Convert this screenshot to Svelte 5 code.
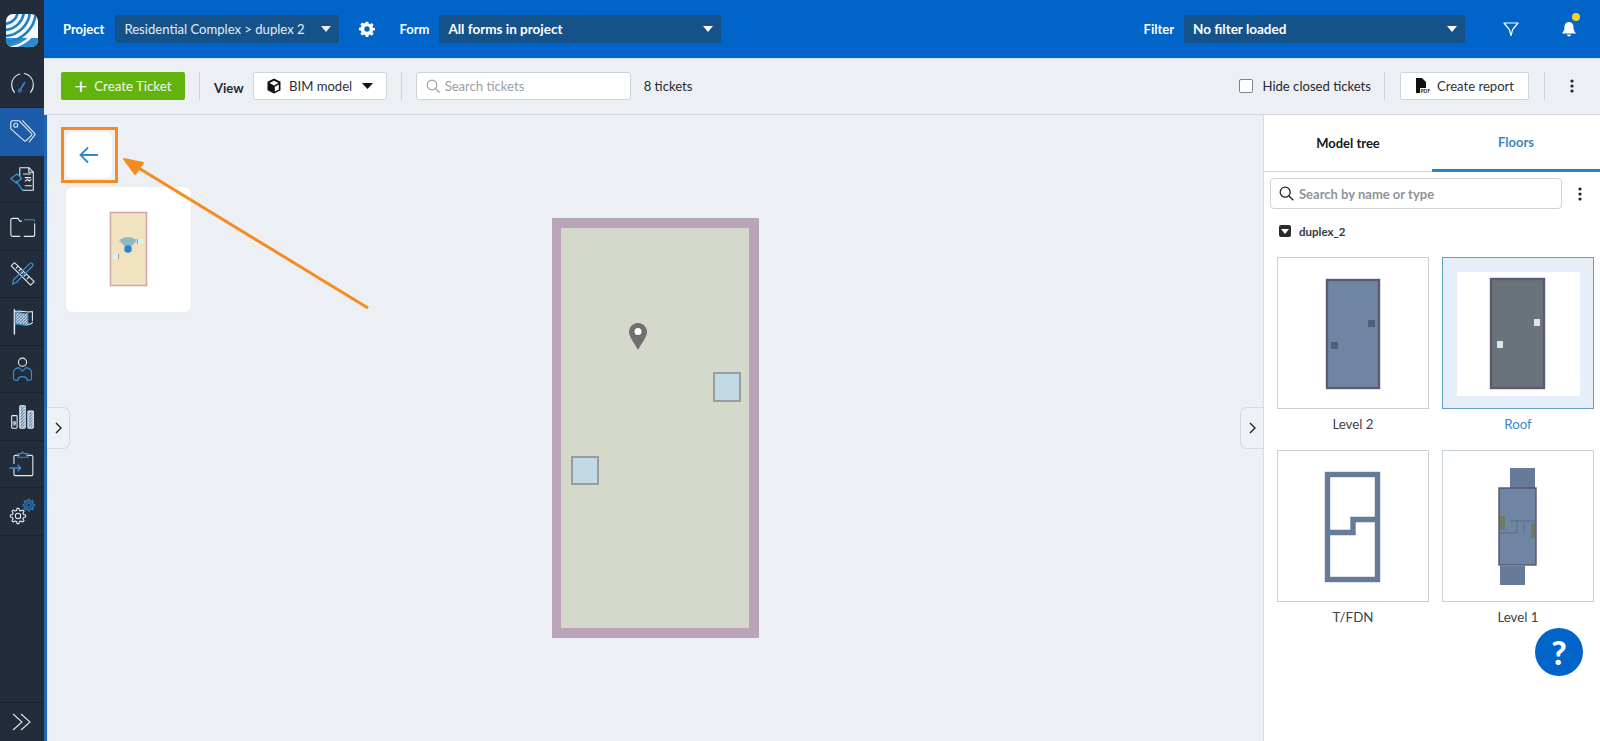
<script>
	let navItems = ['gauge', 'tag', 'report', 'folder', 'tools', 'flag', 'user', 'chart', 'clipboard', 'gears'];
	const floors = ['Level 2', 'Roof', 'T/FDN', 'Level 1'];

	// cog outline, teeth are just alternating radii
	function cog(cx, cy, outer, inner, teeth) {
		let d = '';
		const step = Math.PI / teeth;
		for (let i = 0; i < teeth * 2; i++) {
			const r = i % 2 ? inner : outer;
			for (const off of [-0.32, 0.32]) {
				const a = i * step + off * step;
				d += (d ? 'L' : 'M') + (cx + r * Math.cos(a)).toFixed(2) + ' ' + (cy + r * Math.sin(a)).toFixed(2);
			}
		}
		return d + 'z';
	}
</script>

{#snippet caret()}
	<svg class="caret" width="10" height="6" viewBox="0 0 10 6"><path d="M0 0h10L5 6z" fill="currentColor" /></svg>
{/snippet}

{#snippet kebab()}
	<svg width="4" height="14" viewBox="0 0 4 14" fill="#1d2530"><circle cx="2" cy="2" r="1.6" /><circle cx="2" cy="7" r="1.6" /><circle cx="2" cy="12" r="1.6" /></svg>
{/snippet}

<div class="app">
	<nav class="rail">
		<div class="logo">
			<svg width="32" height="33" viewBox="0 0 32 33">
				<defs><clipPath id="lg"><rect width="32" height="33" rx="7" /></clipPath></defs>
				<g clip-path="url(#lg)">
					<rect width="32" height="33" fill="#f4f8fb" />
					<rect y="24" width="32" height="9" fill="#2a8ccf" />
					<g fill="none" stroke="#1f7fc4" stroke-width="2.6">
						<circle cx="-2" cy="-4" r="14" />
						<circle cx="-2" cy="-4" r="20" />
						<circle cx="-2" cy="-4" r="26" />
						<circle cx="-2" cy="-4" r="32" />
						<circle cx="-2" cy="-4" r="38" stroke="#f4f8fb" />
					</g>
				</g>
			</svg>
		</div>
		{#each navItems as item}
			<div class="nav-item" class:active={item === 'tag'} class:first={item === 'gauge'}>
				<svg width="27" height="27" viewBox="0 0 30 30" fill="none" stroke="#e8edf2" stroke-width="1.2" stroke-linecap="round" stroke-linejoin="round">
					<defs>
						<pattern id="hatch-{item}" width="2.4" height="2.4" patternUnits="userSpaceOnUse" patternTransform="rotate(45)">
							<rect width="2.4" height="2.4" fill="#2d6da6" />
							<path d="M0 0v2.400" stroke="#1c4a78" stroke-width="1" />
						</pattern>
					</defs>
					{#if item === 'gauge'}
						<path d="M6 26a13 13 0 0 1-3-9A12 12 0 0 1 12 5.500" />
						<path d="M17 5a12 12 0 0 1 10 12 13 13 0 0 1-3 9" />
						<path d="M12.500 23l5-8" stroke="#3a8fd0" stroke-width="1.6" />
						<circle cx="12" cy="24" r="1.500" stroke="#3a8fd0" />
					{:else if item === 'tag'}
						<path d="M2 5a2 2 0 0 1 2-2h7l14 14a1.500 1.500 0 0 1 0 2.200l-6 6a1.500 1.500 0 0 1-2.200 0L2 12z" />
						<path d="M15 3l13.500 14a1.500 1.500 0 0 1 0 2l-6 7.500" />
						<circle cx="7.500" cy="8" r="2.200" />
					{:else if item === 'report'}
						<path d="M12 12V3h10l5 5v20H15" />
						<path d="M22 3v5h5M16 10h8M18 14h6M18 18l2.500-2 2 2 2-2M18 23h7" />
						<path d="M2 15l7-5 5 5-6 5zM8 18l7 10" stroke="#3a8fd0" stroke-width="1.500" />
					{:else if item === 'folder'}
						<path d="M14 9h-2L10 6H4a2 2 0 0 0-2 2v16a2 2 0 0 0 2 2h8M17 26h10a1.500 1.500 0 0 0 1.500-1.500V12" />
						<path d="M17 7.500h10a1.500 1.500 0 0 1 1.500 1.500" stroke="#3a8fd0" />
					{:else if item === 'tools'}
						<path d="M6 3L2.500 6.500 24 28l4-4z" />
						<path d="M8 9l2-2M11 12l2-2M14 15l2-2M17 18l2-2M20 21l2-2" />
						<path d="M4 27l1-5L23 4a2 2 0 0 1 3 3L8 25z" stroke="#3a8fd0" stroke-width="1.400" />
					{:else if item === 'flag'}
						<path d="M6 2v27" stroke-width="1.600" />
						<path d="M7 4c6-2 12 2 19 0v10" />
						<path d="M7 5c5-1 9 2 14 1v13c-5 1-9-2-14-1z" fill="url(#hatch-flag)" stroke="#3a8fd0" />
						<path d="M21 18c2 0 4 0 5-2" />
					{:else if item === 'user'}
						<circle cx="15" cy="8" r="4.500" />
						<path d="M11 14c-4 1-6 2-6 5v7a2 2 0 0 0 2 2h3c0-3 2-4 5-4s5 1 5 4h3a2 2 0 0 0 2-2v-7c0-3-2-4-6-5l-4 4z" stroke="#3a8fd0" stroke-width="1.300" />
					{:else if item === 'chart'}
						<path d="M3 24v-9a1 1 0 0 1 1-1h4a1 1 0 0 1 1 1v12a1 1 0 0 1-1 1H4a1 1 0 0 1-1-1z" />
						<rect x="4" y="20" width="4" height="5" fill="url(#hatch-chart)" stroke="none" />
						<rect x="12" y="3" width="6" height="25" rx="1" fill="url(#hatch-chart)" />
						<rect x="21" y="9" width="6" height="19" rx="1" fill="url(#hatch-chart)" />
					{:else if item === 'clipboard'}
						<path d="M11 6H7a1.500 1.500 0 0 0-1.500 1.500V15M5.500 21v6a1.500 1.500 0 0 0 1.500 1.500h18a1.500 1.500 0 0 0 1.500-1.500V7.500A1.500 1.500 0 0 0 25 6h-5" />
						<path d="M10 8V4h3.500l1.500-2 1.500 2H21v4z" stroke="#3a8fd0" />
						<path d="M1 20h12M10 17l3 3-3 3" stroke="#3a8fd0" stroke-width="1.500" />
					{:else}
						<path d={cog(10, 20, 8.5, 6.3, 8)} />
						<circle cx="10" cy="20" r="3" />
						<path d={cog(22, 8, 6.5, 4.8, 8)} stroke="#2d7bb8" fill="#1f4f7e" />
						<circle cx="22" cy="8" r="2.200" stroke="#2d7bb8" fill="#232c3a" />
					{/if}
				</svg>
			</div>
		{/each}
		<div class="expand">
			<svg width="20" height="20" viewBox="0 0 20 20" fill="none" stroke="#dfe5eb" stroke-width="1.100"><path d="M1 2l9 8-9 8M9 2l9 8-9 8" /></svg>
		</div>
	</nav>

	<div class="page">
		<header class="topbar">
			<span class="top-label">Project</span>
			<div class="select project"><span>Residential Complex &gt; duplex 2</span>{@render caret()}</div>
			<svg class="gear" width="16" height="16" viewBox="0 0 24 24" fill="#fff"><path fill-rule="evenodd" d="M10 1h4l.6 3.100 2 .8 2.600-1.800 2.800 2.800-1.800 2.600.8 2L24 10v4l-3 .6-.8 2 1.800 2.600-2.800 2.800-2.600-1.800-2 .8L14 24h-4l-.6-3.100-2-.8-2.600 1.800-2.800-2.800 1.800-2.600-.8-2L0 14v-4l3-.6.8-2L2 4.900l2.800-2.800 2.600 1.800 2-.8zM12 8a4 4 0 1 0 0 8 4 4 0 0 0 0-8z" /></svg>
			<span class="top-label form">Form</span>
			<div class="select strong forms"><span>All forms in project</span>{@render caret()}</div>
			<span class="top-label filter">Filter</span>
			<div class="select strong filters"><span>No filter loaded</span>{@render caret()}</div>
			<svg class="funnel" width="16" height="16" viewBox="0 0 16 16" fill="none" stroke="#fff" stroke-width="1.200" stroke-linejoin="round"><path d="M1 2h14L9.700 8.500 8 14.500 6.300 8.500z" /></svg>
			<div class="bell">
				<svg width="14" height="16" viewBox="0 0 14 16" fill="#fff"><path d="M7 1c-3 0-4.500 2.400-4.500 5 0 3-1 4.600-2.500 6.500h14C12.500 10.600 11.500 9 11.500 6 11.500 3.400 10 1 7 1zM5 13.500h4a2 2 0 0 1-4 0z" /></svg>
				<span class="dot"></span>
			</div>
		</header>

		<div class="toolbar">
			<button class="create"><span class="plus">+</span>Create Ticket</button>
			<span class="sep"></span>
			<span class="view-label">View</span>
			<button class="btn bim">
				<svg width="16" height="16" viewBox="0 0 16 16"><path d="M8 .5l6.500 3.200v8.600L8 15.500l-6.500-3.200V3.700z" fill="#111" /><path d="M8 7.500L3.500 5 8 2.800 12.500 5zM8.800 8.700l4-2.200v5l-4 2z" fill="#fff" /></svg>
				BIM model
				<svg class="bim-caret" width="11" height="6" viewBox="0 0 11 6"><path d="M0 0h11L5.500 6z" fill="#111" /></svg>
			</button>
			<span class="sep"></span>
			<div class="ticket-search">
				<svg width="14" height="14" viewBox="0 0 14 14" fill="none" stroke="#9aa1a9" stroke-width="1.200"><circle cx="6" cy="6" r="4.800" /><path d="M9.500 9.500L13.500 13.500" /></svg>
				<span>Search tickets</span>
			</div>
			<span class="count">8 tickets</span>
			<span class="checkbox"></span>
			<span class="hide">Hide closed tickets</span>
			<span class="sep right"></span>
			<button class="btn report">
				<svg width="15" height="16" viewBox="0 0 15 16"><path d="M1 0h6l4 4v6H5v5H1z" fill="#111" /><text x="5.500" y="15" font-size="5" font-weight="700" fill="#111" font-family="Lato, sans-serif">PDF</text></svg>
				Create report
			</button>
			<span class="sep last"></span>
			<span class="tool-kebab">{@render kebab()}</span>
		</div>

		<div class="body">
			<main class="canvas">
				<div class="back-column">
					<button class="back" aria-label="Back">
						<svg width="20" height="18" viewBox="0 0 20 18" fill="none" stroke="#2f88c7" stroke-width="1.800"><path d="M19 9H1.500M9 1.500L1.500 9 9 16.500" /></svg>
					</button>
					<div class="minimap">
						<svg width="125" height="125" viewBox="0 0 125 125">
							<rect x="44.500" y="25.500" width="36" height="73" fill="#f1e2c0" stroke="#d3aaa8" stroke-width="1.600" />
							<path d="M53 53q9-6 18 0l-6 7h-6z" fill="#8db9cc" />
							<circle cx="62" cy="62" r="3.800" fill="#2a86c8" />
							<rect x="72" y="52" width="5" height="5" fill="#dff1f3" />
							<path d="M71.500 52v5" stroke="#9a9d9f" />
							<rect x="47" y="67" width="5" height="5" fill="#dff1f3" />
							<path d="M52.500 67v5" stroke="#9a9d9f" />
						</svg>
					</div>
				</div>

				<svg class="plan" width="207" height="420" viewBox="0 0 207 420">
					<rect width="207" height="420" fill="#baa4b9" />
					<rect x="9" y="10" width="188" height="400" fill="#d5d9cb" />
					<rect x="162" y="155" width="26" height="28" fill="#c2dae5" stroke="#9a9d9f" stroke-width="2" />
					<rect x="20" y="239" width="26" height="27" fill="#c2dae5" stroke="#9a9d9f" stroke-width="2" />
					<path d="M86 105c-5 0-9 4-9 9 0 5 6 12 9 18 3-6 9-13 9-18 0-5-4-9-9-9z" fill="#6f6f6f" />
					<circle cx="86" cy="113.500" r="3.500" fill="#fff" />
				</svg>

				<div class="tab left-tab"><svg width="9" height="12" viewBox="0 0 9 12" fill="none" stroke="#222" stroke-width="1.400"><path d="M2 1l5 5-5 5" /></svg></div>
				<div class="tab right-tab"><svg width="9" height="12" viewBox="0 0 9 12" fill="none" stroke="#222" stroke-width="1.400"><path d="M2 1l5 5-5 5" /></svg></div>

				<!-- annotation drawn over the screenshot -->
				<span class="callout"></span>
				<svg class="arrow" width="330" height="200" viewBox="0 0 330 200">
					<path d="M321 193L90 52" stroke="#f68b1f" stroke-width="3" fill="none" />
					<path d="M77 44l19 4-8 11z" fill="#f68b1f" stroke="#f68b1f" stroke-width="2" stroke-linejoin="round" />
				</svg>
			</main>

			<aside class="panel">
				<div class="tabs">
					<div class="tab-title">Model tree</div>
					<div class="tab-title current">Floors</div>
				</div>
				<div class="panel-search">
					<div class="search-box">
						<svg width="15" height="15" viewBox="0 0 15 15" fill="none" stroke="#222" stroke-width="1.300"><circle cx="6.200" cy="6.200" r="5" /><path d="M10 10l4.300 4.300" /></svg>
						<span>Search by name or type</span>
					</div>
					<span class="panel-kebab">{@render kebab()}</span>
				</div>
				<div class="tree-row">
					<span class="tree-toggle"><svg width="8" height="5" viewBox="0 0 8 5"><path d="M0 0h8L4 5z" fill="#fff" /></svg></span>
					duplex_2
				</div>
				<div class="floors">
					{#each floors as floor}
						<div class="floor" class:selected={floor === 'Roof'}>
							<div class="thumb">
								<svg width="150" height="150" viewBox="0 0 150 150">
									{#if floor === 'Level 2'}
										<rect x="49" y="22" width="52" height="108" fill="#6f86a3" stroke="#5c5a72" stroke-width="2.400" />
										<rect x="90" y="62" width="7" height="7" fill="#4e6178" />
										<rect x="53" y="84" width="7" height="7" fill="#4e6178" />
									{:else if floor === 'Roof'}
										<rect x="14" y="14" width="123" height="124" fill="#fff" />
										<rect x="48" y="21" width="53" height="109" fill="#68747a" stroke="#5c5a72" stroke-width="2.400" />
										<rect x="91" y="61" width="6" height="7" fill="#dfe5e3" />
										<rect x="54" y="83" width="6" height="7" fill="#dfe5e3" />
									{:else if floor === 'T/FDN'}
										<rect x="49.500" y="23.500" width="50" height="105" fill="none" stroke="#657b97" stroke-width="5.400" />
										<path d="M49.500 81.500h25.500V68.500h24.500" fill="none" stroke="#657b97" stroke-width="5.400" />
									{:else}
										<rect x="67" y="17" width="25" height="20" fill="#657b97" />
										<rect x="57" y="115" width="25" height="19" fill="#657b97" />
										<rect x="56" y="37" width="37" height="77" fill="#6f86a3" stroke="#5c4f6a" stroke-width="1.400" />
										<rect x="57" y="65" width="5" height="14" fill="#6f7a68" />
										<rect x="88" y="72" width="4" height="15" fill="#6f7a68" />
										<path d="M57 82h17V70M67 70h25M81 72v10" fill="none" stroke="#4d5f7a" stroke-width="0.700" />
									{/if}
								</svg>
							</div>
							<div class="floor-name">{floor}</div>
						</div>
					{/each}
				</div>
				<div class="help">?</div>
			</aside>
		</div>
	</div>
</div>

<style>
	:global(body) {
		margin: 0;
		overflow: hidden;
	}

	.app {
		display: flex;
		width: 1600px;
		height: 741px;
		overflow: hidden;
		font-family: Lato, "Liberation Sans", sans-serif;
		color: #1f2833;
		font-size: 13px;
	}

	.rail {
		width: 44px;
		flex: none;
		display: flex;
		flex-direction: column;
		background: #232c3a;
	}

	.logo {
		height: 58px;
		flex: none;
		display: flex;
		align-items: flex-start;
		justify-content: center;
		padding-top: 14px;
		box-sizing: border-box;
	}

	.nav-item {
		height: 47.500px;
		flex: none;
		display: flex;
		align-items: center;
		justify-content: center;
		box-sizing: border-box;
		border-bottom: 1px solid #1a222e;
	}

	.nav-item.first {
		height: 50px;
	}

	.nav-item.active {
		background: #1c5ba8;
		border-bottom: 0;
	}

	.expand {
		margin-top: auto;
		height: 38px;
		border-top: 1px solid #1a222e;
		display: flex;
		align-items: center;
		justify-content: center;
	}

	.page {
		flex: 1;
		display: flex;
		flex-direction: column;
		min-width: 0;
	}

	.topbar {
		height: 58px;
		flex: none;
		display: flex;
		align-items: center;
		background: #0064c8;
		color: #fff;
		padding-left: 19px;
		box-sizing: border-box;
	}

	.top-label {
		font-weight: 700;
		font-size: 13px;
	}

	.select {
		height: 28px;
		display: flex;
		align-items: center;
		justify-content: space-between;
		background: #15528a;
		border-radius: 2px;
		padding: 0 8px 0 9px;
		box-sizing: border-box;
		color: #e4edf6;
		font-size: 13.100px;
	}

	.select.strong {
		font-weight: 700;
		font-size: 13.500px;
		color: #fff;
	}

	.project {
		width: 224px;
		margin-left: 11px;
	}

	.gear {
		margin-left: 20px;
	}

	.form {
		margin-left: 24px;
	}

	.forms {
		width: 282px;
		margin-left: 10px;
	}

	.filter {
		margin-left: auto;
	}

	.filters {
		width: 281px;
		margin-left: 10px;
	}

	.funnel {
		margin-left: 38px;
	}

	.bell {
		position: relative;
		display: flex;
		margin-left: 43px;
		margin-right: 24px;
	}

	.dot {
		position: absolute;
		top: -8px;
		left: 10px;
		width: 8px;
		height: 8px;
		border-radius: 50%;
		background: #f5d327;
	}

	.toolbar {
		height: 57px;
		flex: none;
		display: flex;
		align-items: center;
		background: #ecf0f4;
		border-top: 1px solid #cfe0f2;
		border-bottom: 1px solid #d5d9de;
		box-sizing: border-box;
		padding: 0 0 2px 17px;
		font-size: 13.100px;
	}

	button {
		font-family: inherit;
		cursor: pointer;
	}

	.create {
		width: 124px;
		height: 28px;
		display: flex;
		align-items: center;
		justify-content: center;
		gap: 7px;
		background: #63b30f;
		border: 0;
		border-radius: 2px;
		color: #f1f8e8;
		font-size: 13.300px;
		padding: 0;
	}

	.plus {
		font-size: 22px;
		line-height: 22px;
		font-weight: 400;
		color: #fff;
	}

	.sep {
		width: 1px;
		height: 28px;
		background: #cdd2d8;
		margin: 0 14px;
		flex: none;
	}

	.view-label {
		font-weight: 700;
		font-size: 13px;
		margin-right: 9px;
		margin-top: 4px;
	}

	.btn {
		height: 28px;
		display: flex;
		align-items: center;
		background: #fff;
		border: 1px solid #d0d5db;
		border-radius: 2px;
		color: #2a323c;
		font-size: 13.100px;
		padding: 0;
		box-sizing: border-box;
	}

	.bim {
		width: 134px;
		justify-content: center;
		gap: 7px;
	}

	.bim-caret {
		margin-left: 3px;
	}

	.ticket-search {
		width: 215px;
		height: 28px;
		display: flex;
		align-items: center;
		gap: 5px;
		padding-left: 9px;
		box-sizing: border-box;
		background: #fff;
		border: 1px solid #cdd2d9;
		border-radius: 3px;
		color: #98a0a8;
	}

	.count {
		margin-left: 13px;
	}

	.checkbox {
		width: 12px;
		height: 12px;
		margin-left: auto;
		background: #fff;
		border: 1px solid #7d838a;
		border-radius: 2px;
	}

	.hide {
		margin-left: 9px;
	}

	.sep.right {
		margin: 0 15px 0 13px;
	}

	.sep.last {
		margin: 0 0 0 15px;
	}

	.report {
		width: 129px;
		justify-content: center;
		gap: 7px;
	}

	.tool-kebab {
		display: flex;
		margin-left: 25px;
		margin-right: 26px;
	}

	.body {
		flex: 1;
		display: flex;
		min-height: 0;
	}

	.canvas {
		position: relative;
		flex: 1;
		background: #ecf0f4;
		border-left: 3px solid #2267b4;
		box-shadow: inset 1px 0 #dbe9f7;
		box-sizing: border-box;
	}

	.back-column {
		display: flex;
		flex-direction: column;
		align-items: flex-start;
		gap: 9px;
		padding: 17px 0 0 19px;
	}

	.back {
		width: 46px;
		height: 46px;
		display: flex;
		align-items: center;
		justify-content: center;
		background: #fff;
		border: 0;
		border-radius: 6px;
		padding: 0;
	}

	.minimap {
		width: 125px;
		height: 125px;
		background: #fff;
		border-radius: 6px;
		box-shadow: 0 0 1px #d5d9de;
	}

	.plan {
		position: absolute;
		left: 505px;
		top: 103px;
	}

	.tab {
		position: absolute;
		top: 292px;
		width: 23px;
		height: 42px;
		display: flex;
		align-items: center;
		justify-content: center;
		background: #eef2f6;
		border: 1px solid #d5d9de;
		box-sizing: border-box;
	}

	.left-tab {
		left: 0;
		border-left: 0;
		border-radius: 0 7px 7px 0;
	}

	.right-tab {
		right: 0;
		border-right: 0;
		border-radius: 7px 0 0 7px;
	}

	.callout {
		position: absolute;
		left: 14px;
		top: 12px;
		width: 57px;
		height: 56px;
		border: 3px solid #f68b1f;
		box-sizing: border-box;
	}

	.arrow {
		position: absolute;
		left: 0;
		top: 0;
		overflow: visible;
	}

	.panel {
		position: relative;
		width: 337px;
		flex: none;
		background: #fff;
		border-left: 1px solid #d5dce3;
		box-sizing: border-box;
	}

	.tabs {
		height: 57px;
		display: grid;
		grid-template-columns: 168px 168px;
		border-bottom: 1px solid #c9d5df;
		box-sizing: border-box;
	}

	.tab-title {
		display: flex;
		align-items: center;
		justify-content: center;
		font-weight: 700;
		font-size: 13px;
		color: #16191d;
	}

	.tab-title.current {
		color: #3b86c2;
		border-bottom: 3px solid #2a83c4;
		margin-bottom: -1px;
	}

	.panel-search {
		display: flex;
		align-items: center;
		padding: 6px 0 0 6px;
	}

	.search-box {
		width: 292px;
		height: 31px;
		display: flex;
		align-items: center;
		gap: 5px;
		padding-left: 8px;
		box-sizing: border-box;
		border: 1px solid #cfd3d8;
		border-radius: 4px;
		color: #8e9499;
		font-weight: 700;
		font-size: 13px;
	}

	.panel-kebab {
		display: flex;
		margin-left: 16px;
	}

	.tree-row {
		display: flex;
		align-items: center;
		gap: 8px;
		margin: 14px 0 0 15px;
		font-size: 11.500px;
		font-weight: 700;
		color: #333a42;
		height: 16px;
	}

	.tree-toggle {
		width: 12px;
		height: 12px;
		display: flex;
		align-items: center;
		justify-content: center;
		background: #2b2b2f;
		border-radius: 2px;
	}

	.floors {
		display: grid;
		grid-template-columns: 152px 152px;
		column-gap: 13px;
		row-gap: 18px;
		margin: 18px 0 0 13px;
	}

	.thumb {
		width: 152px;
		height: 152px;
		box-sizing: border-box;
		border: 1px solid #c6ced6;
		background: #fff;
	}

	.thumb svg {
		display: block;
	}

	.floor.selected .thumb {
		background: #e6eef9;
		border-color: #5aa0c8;
	}

	.floor-name {
		text-align: center;
		font-size: 13.300px;
		color: #3b4148;
		margin-top: 7px;
		line-height: 16px;
	}

	.floor.selected .floor-name {
		color: #3b86c2;
	}

	.help {
		position: absolute;
		left: 271px;
		bottom: 65px;
		width: 48px;
		height: 48px;
		border-radius: 50%;
		background: #0064c8;
		color: #fff;
		display: flex;
		align-items: center;
		justify-content: center;
		font-size: 33px;
		font-weight: 900;
	}
</style>
